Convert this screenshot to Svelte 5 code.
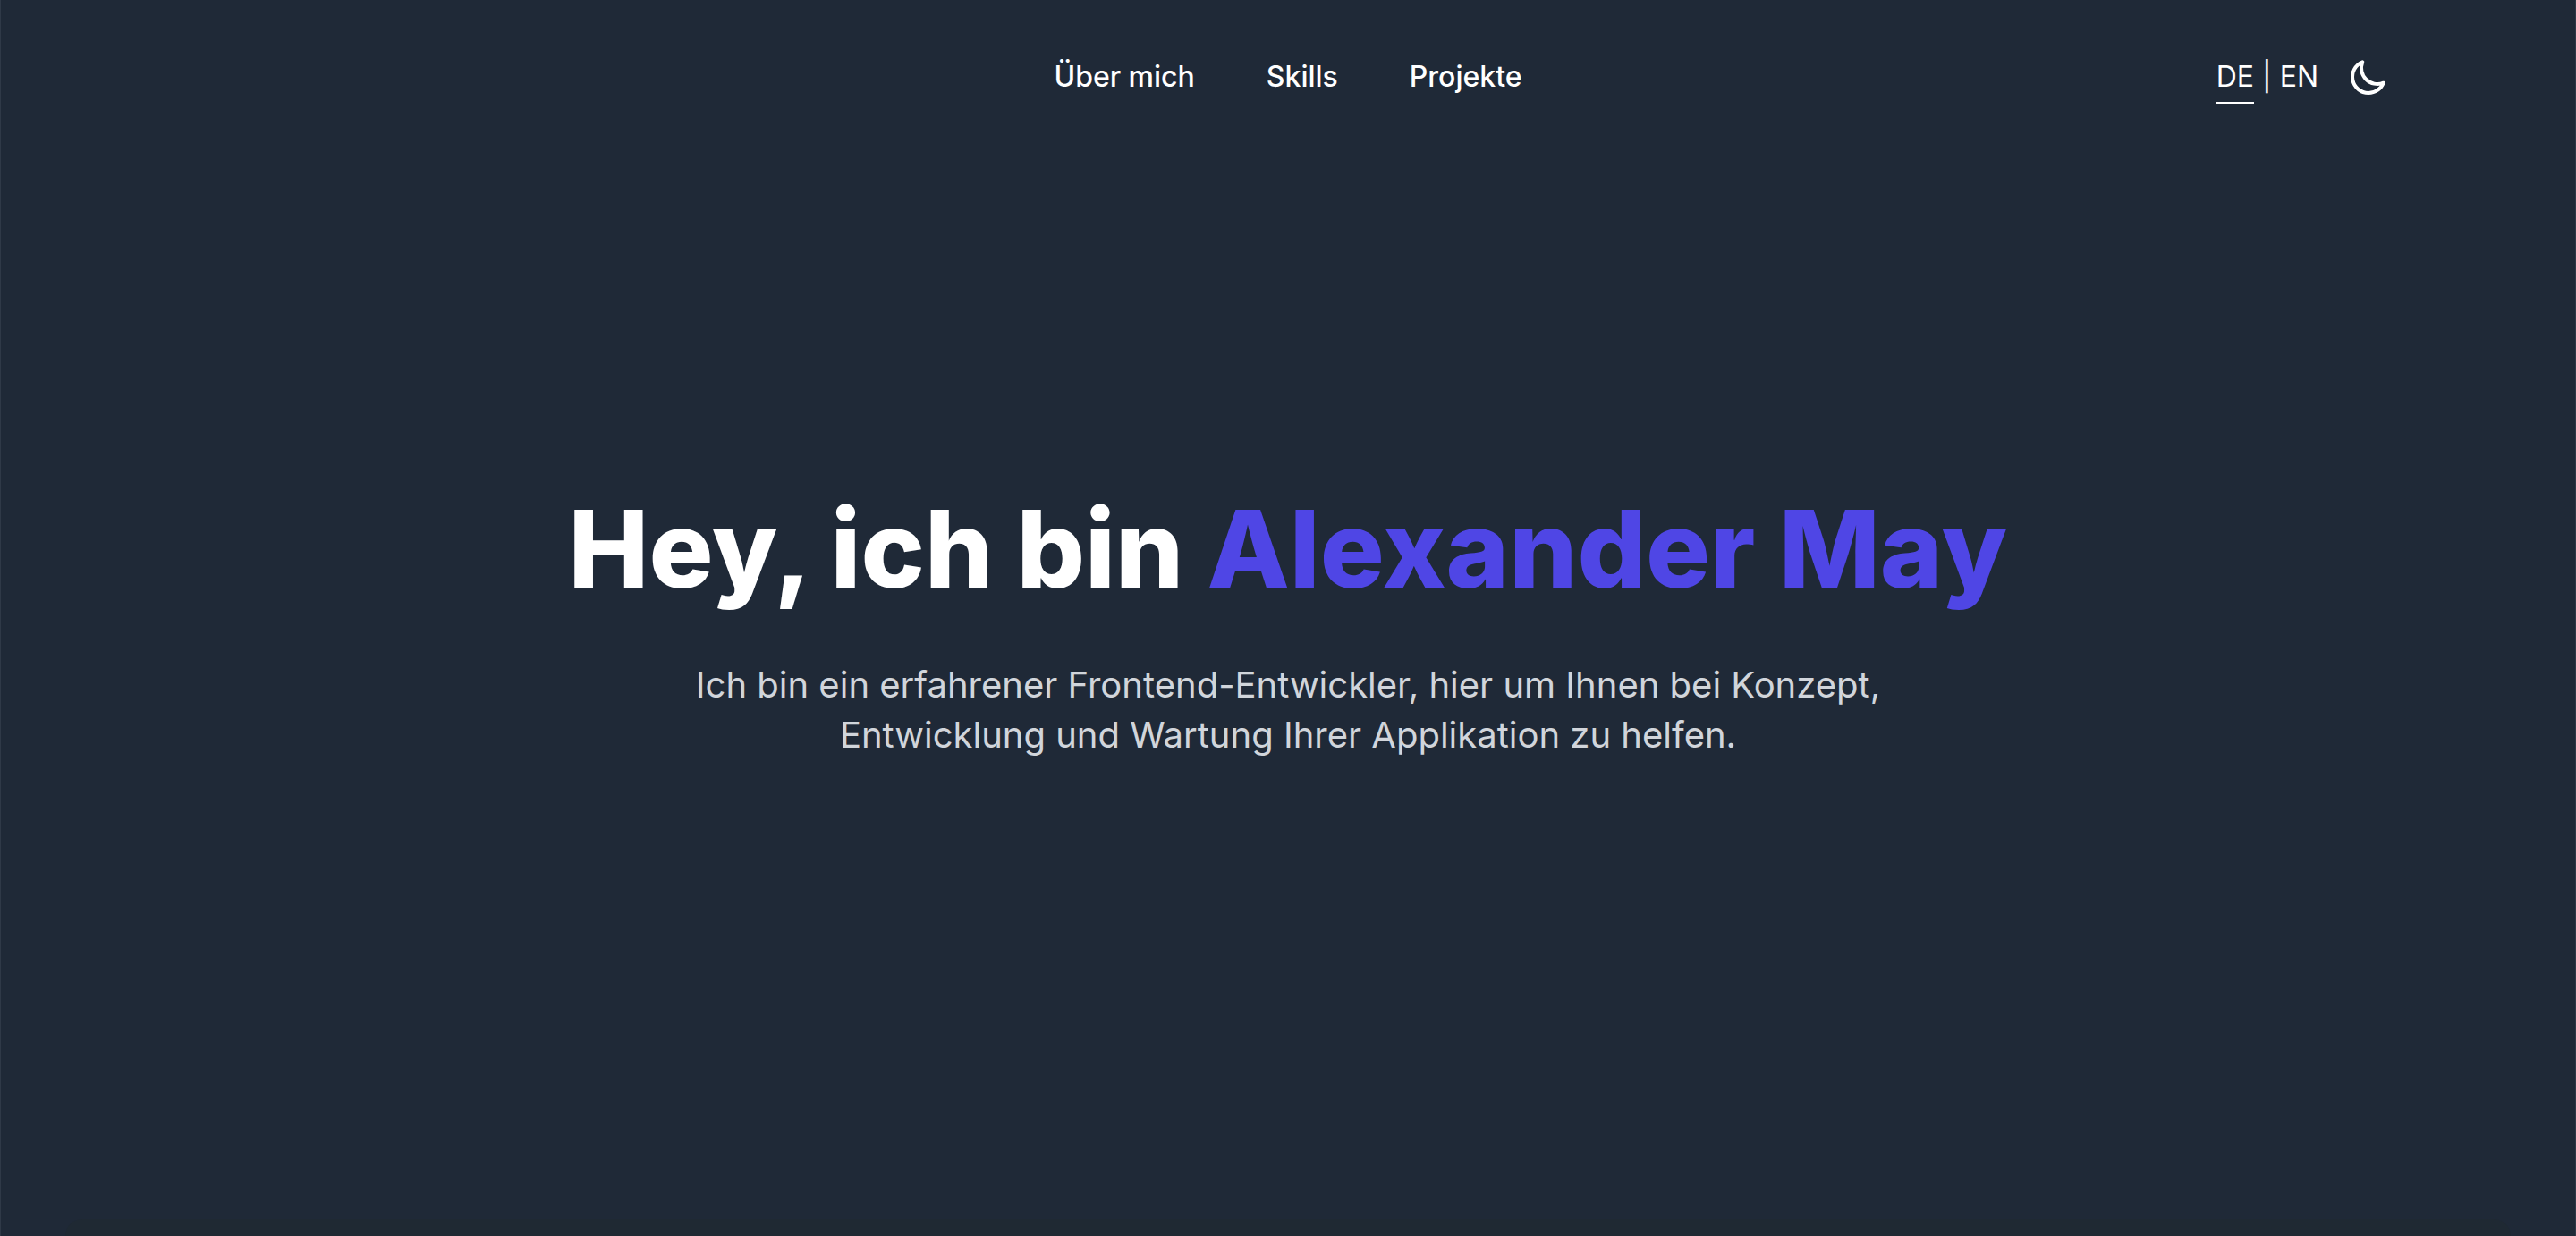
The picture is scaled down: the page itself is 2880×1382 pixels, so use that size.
<script>
  const links = [
    { href: '#about', label: 'Über mich' },
    { href: '#skills', label: 'Skills' },
    { href: '#projects', label: 'Projekte' },
  ];
  const languages = [
    { code: 'DE', label: 'Deutsch' },
    { code: 'EN', label: 'English' },
  ];
  let language = $state('DE');
</script>

<div class="page">
  <header class="header">
    <nav class="nav" aria-label="Navigation">
      {#each links as link}
        <a href={link.href}>{link.label}</a>
      {/each}
    </nav>
    <div class="tools">
      <div class="languages">
        {#each languages as item, i}
          {#if i > 0}<span class="bar">|</span>{/if}
          <button
            class="language"
            class:active={language === item.code}
            aria-pressed={language === item.code}
            title={item.label}
            onclick={() => (language = item.code)}>{item.code}</button>
        {/each}
      </div>
      <button class="theme" aria-label="Farbschema wechseln">
        <svg viewBox="0 0 24 24" fill="none" stroke="currentColor" stroke-width="2" stroke-linecap="round" stroke-linejoin="round" aria-hidden="true">
          <path d="M20.354 15.354A9 9 0 018.646 3.646 9.003 9.003 0 0012 21a9.003 9.003 0 008.354-5.646z" />
        </svg>
      </button>
    </div>
  </header>

  <main class="hero">
    <h1>Hey, ich bin <span>Alexander May</span></h1>
    <p>Ich bin ein erfahrener Frontend-Entwickler, hier um Ihnen bei Konzept, Entwicklung und Wartung Ihrer Applikation zu helfen.</p>
  </main>

  <section class="panel" id="about"></section>
</div>

<style>
  :global(body) {
    background: #1f2937;
  }

  .page {
    box-sizing: border-box;
    display: flex;
    flex-direction: column;
    min-height: 100vh;
    border-left: 1px solid #2f3947;
    border-right: 1px solid #2f3947;
    background: #1f2937;
    color: #fff;
    font-family: Inter, 'Liberation Sans', sans-serif;
    font-size: 32px;
    line-height: 48px;
  }

  .header {
    box-sizing: border-box;
    display: grid;
    grid-template-columns: 1fr auto 1fr;
    align-items: center;
    width: 100%;
    max-width: 2560px;
    margin: 0 auto;
    padding: 56px 48px 48px;
  }

  .nav {
    grid-column: 2;
    display: flex;
    gap: 80px;
    font-weight: 500;
  }

  .nav a {
    color: inherit;
    text-decoration: none;
  }

  .tools {
    display: flex;
    align-items: center;
    justify-content: flex-end;
    gap: 32px;
  }

  .languages {
    display: flex;
    align-items: center;
    gap: 9px;
  }

  button {
    padding: 0;
    border: 0;
    background: none;
    color: inherit;
    font: inherit;
    cursor: pointer;
  }

  .language {
    padding: 6px 0 4px;
    border-bottom: 2px solid transparent;
  }

  .active {
    border-color: #fff;
  }

  .theme svg {
    display: block;
    width: 48px;
    height: 48px;
  }

  .hero {
    flex: 1;
    padding: 390px 48px 0;
    text-align: center;
  }

  h1 {
    margin: 0;
    font-size: 120px;
    font-weight: 800;
    line-height: 120px;
  }

  h1 span {
    color: #4f46e5;
  }

  p {
    max-width: 1344px;
    margin: 64px auto 0;
    color: #d1d5db;
    font-size: 40px;
    line-height: 56px;
  }

  .panel {
    flex: none;
    height: 19px;
    margin: 0 72px;
    border-radius: 48px 48px 0 0;
    background: #1f2933;
  }
</style>
